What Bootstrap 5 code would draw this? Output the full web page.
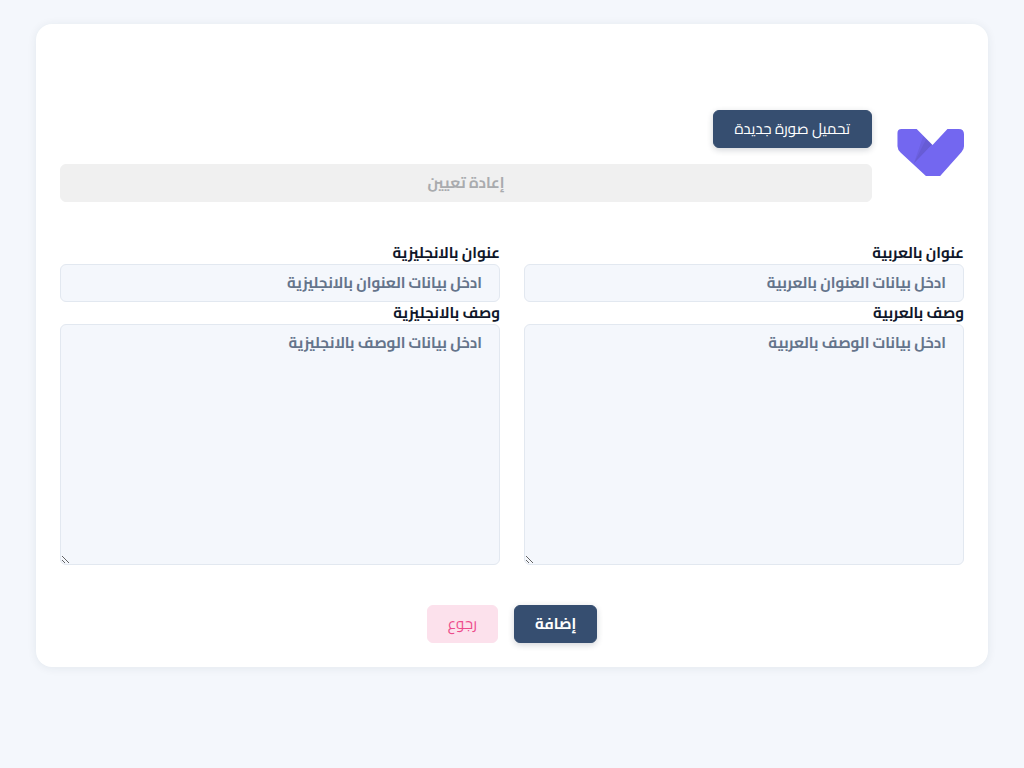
<!DOCTYPE html>
<html lang="ar" dir="rtl">
<head>
<meta charset="utf-8">
<meta name="viewport" content="width=device-width, initial-scale=1">
<title>إضافة</title>
<link href="https://cdn.jsdelivr.net/npm/bootstrap@5.3.0/dist/css/bootstrap.min.css" rel="stylesheet">
<style>
  body { background: #f4f7fc; color: #0f172a; font-family: Cairo, "Noto Sans Arabic", sans-serif; font-size: 15px; }
  .page { padding: 24px 36px; }
  .panel { background: #fff; border-radius: 16px; padding: 86px 24px 24px; box-shadow: 0 1px 10px rgba(30, 50, 70, .08); }
  .logo { width: 68px; height: 47px; flex: none; }
  .form-label { line-height: 22px; font-weight: 700; margin: 0; display: block; }
  .form-control { background: #f4f7fc; border: 1px solid #e2e8f0; border-radius: 6px; color: #0f172a; font-size: 15px; font-weight: 700; line-height: 24px; padding: 6px 17px; }
  .form-control::placeholder { color: #64748b; opacity: 1; }
  textarea.form-control { height: 241px; }
  .btn { font-size: 15px; line-height: 24px; padding: 6px 20px; border-radius: 6px; }
  .btn-upload { padding: 6px 21px; }
  .btn-navy, .btn-navy:hover { background: #364e70; border-color: #364e70; color: #fff; box-shadow: 0 2px 6px rgba(30, 40, 60, .2); }
  .btn-mute, .btn-mute:disabled { background: #f0f0f0; border-color: #f0f0f0; color: #a9abae; opacity: 1; }
  .btn-rose, .btn-rose:hover { background: #fce1ec; border-color: #fce1ec; color: #ed4b8b; }
</style>
<script src="https://cdn.jsdelivr.net/npm/bootstrap@5.3.0/dist/js/bootstrap.bundle.min.js"></script>
</head>
<body>
<main class="page">
  <form class="panel">
    <div class="d-flex align-items-center gap-4">
      <svg class="logo mb-2" viewBox="0 0 201 142" preserveAspectRatio="xMaxYMid meet" role="img" aria-label="الشعار">
        <path fill="#7367f0" d="M12 0H58L106 48L151 0H185Q201 0 201 16V52Q201 62 193 70L129 142H86L10 72Q0 62 0 52V12Q0 0 12 0Z"/>
        <path fill="#161616" fill-opacity=".06" d="M49 105L78 21L104 47Z"/>
        <path fill="#161616" fill-opacity=".06" d="M50 103L87 30L104 47Z"/>
      </svg>
      <div class="flex-grow-1 d-flex flex-column align-items-start gap-3">
        <button type="button" class="btn btn-navy btn-upload">تحميل صورة جديدة</button>
        <button type="button" class="btn btn-mute fw-bold w-100" disabled>إعادة تعيين</button>
      </div>
    </div>
    <div class="row mt-4 pt-3">
      <div class="col-6">
        <label class="form-label" for="title-ar">عنوان بالعربية</label>
        <input class="form-control" id="title-ar" type="text" placeholder="ادخل بيانات العنوان بالعربية">
      </div>
      <div class="col-6">
        <label class="form-label" for="title-en">عنوان بالانجليزية</label>
        <input class="form-control" id="title-en" type="text" placeholder="ادخل بيانات العنوان بالانجليزية">
      </div>
      <div class="col-6">
        <label class="form-label" for="desc-ar">وصف بالعربية</label>
        <textarea class="form-control" id="desc-ar" placeholder="ادخل بيانات الوصف بالعربية"></textarea>
      </div>
      <div class="col-6">
        <label class="form-label" for="desc-en">وصف بالانجليزية</label>
        <textarea class="form-control" id="desc-en" placeholder="ادخل بيانات الوصف بالانجليزية"></textarea>
      </div>
    </div>
    <div class="d-flex justify-content-center gap-3 mt-4 pt-3">
      <button type="submit" class="btn btn-navy fw-bold">إضافة</button>
      <button type="button" class="btn btn-rose">رجوع</button>
    </div>
  </form>
</main>
</body>
</html>
